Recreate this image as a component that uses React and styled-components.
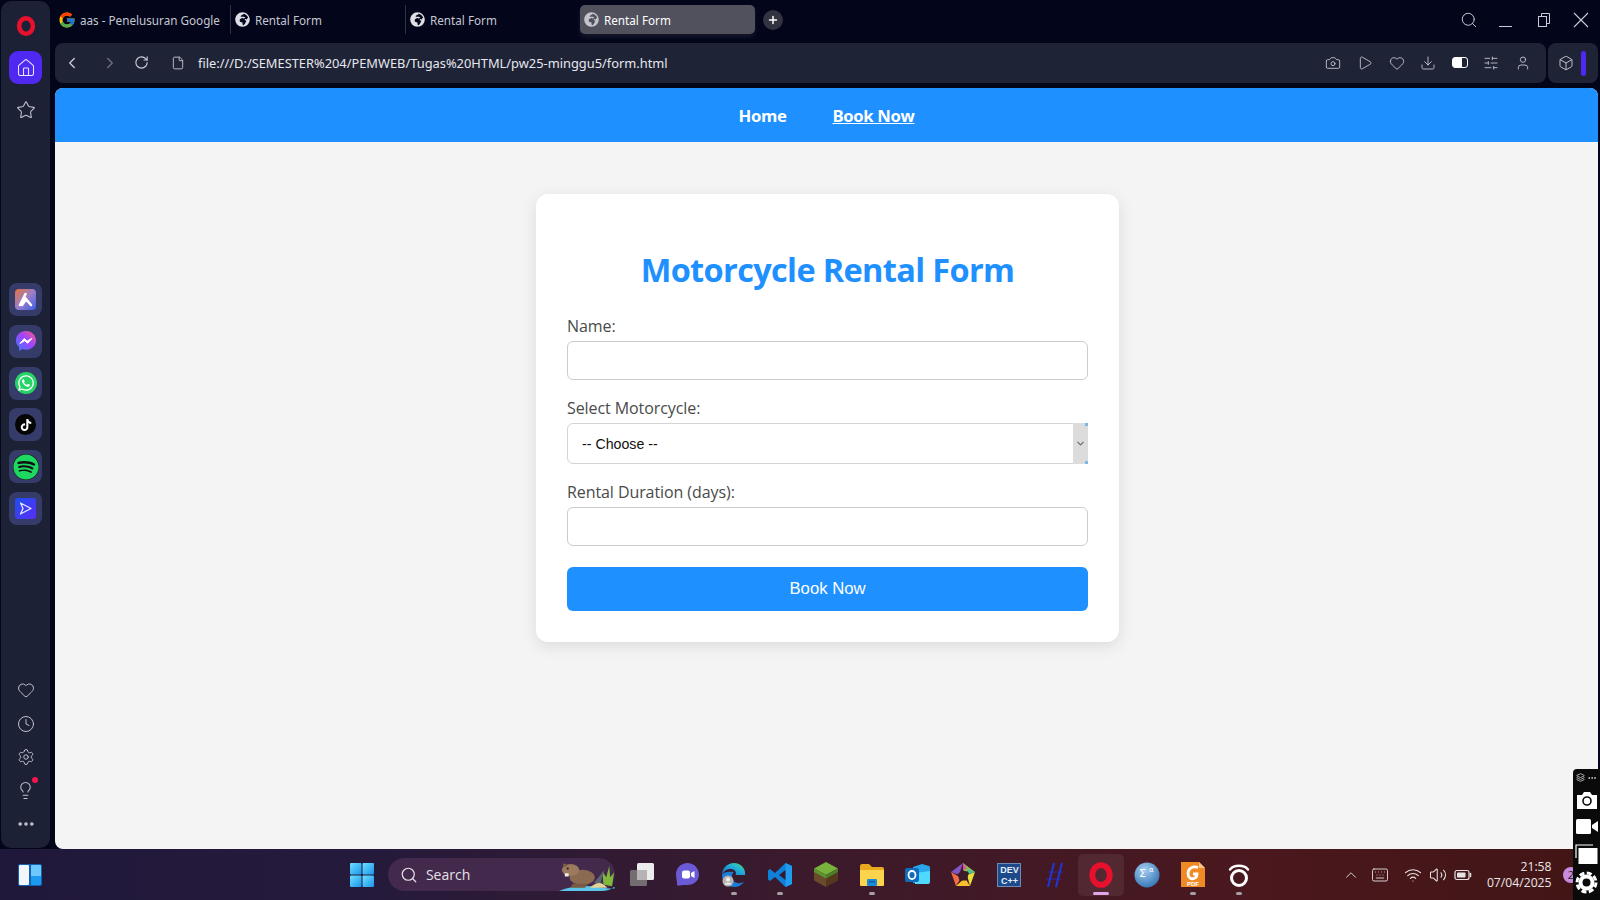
import React from "react";
import styled, { createGlobalStyle } from "styled-components";
import {
  Home, Star, Heart, Clock, Settings, Lightbulb, MoreHorizontal, Search,
  Camera, Play, Download, SlidersHorizontal, User, Box, ChevronLeft, ChevronRight, ChevronDown,
  ChevronUp, RotateCw, File, Plus, Keyboard, Wifi, Volume2, Layers,
} from "lucide-react";
import { FcGoogle } from "react-icons/fc";
import { FaWhatsapp, FaTiktok, FaSpotify, FaGlobeAfrica } from "react-icons/fa";

const Global = createGlobalStyle`
  html, body { margin: 0; padding: 0; background: #03051a; }
  * { box-sizing: border-box; }
`;

const Desktop = styled.div`
  position: relative; width: 1600px; height: 900px; overflow: hidden;
  display: flex; flex-direction: column; background: #03051a;
  font-family: "Noto Sans", sans-serif;
`;
const Workspace = styled.div`display: flex; height: 849px;`;

const Sidebar = styled.aside`
  width: 49px; margin: 1px 0 1px 1px; border-radius: 10px; background: #1d2135;
  display: flex; flex-direction: column; align-items: center; color: #bfc2cf;
  padding: 8px 0 8px;
`;
const SideGroup = styled.div`
  display: flex; flex-direction: column; align-items: center; gap: ${p => p.$gap}px;
  margin-top: ${p => p.$top || 0}px;
`;
const BottomGroup = styled(SideGroup)`margin-top: auto;`;
const SideIcon = styled.div`
  position: relative; width: 33px; height: 33px; display: flex; align-items: center; justify-content: center;
`;
const HomeButton = styled(SideIcon)`background: #4f28f2; border-radius: 9px; color: #e8e6ff;`;
const AppTile = styled.div`
  width: 33px; height: 33px; border-radius: 8px; background: #363c69;
  display: flex; align-items: center; justify-content: center;
`;
const RoundBadge = styled.div`
  width: ${p => p.$s || 22}px; height: ${p => p.$s || 22}px; border-radius: 50%; background: ${p => p.$bg};
  color: ${p => p.$fg || "#fff"}; display: flex; align-items: center; justify-content: center;
`;
const RedDot = styled.span`
  position: absolute; right: 4px; top: 3px; width: 6px; height: 6px; border-radius: 50%; background: #f5164f;
`;

const Browser = styled.div`
  flex: 1; min-width: 0; margin: 0 2px 0 5px; display: flex; flex-direction: column;
`;
const TabBar = styled.div`display: flex; align-items: center; height: 43px; padding-bottom: 4px; color: #c9ccd6;`;
const Tab = styled.div`
  position: relative; width: 175px; height: 29px; display: flex; align-items: center; gap: ${p => p.$gap || 5}px;
  padding-left: ${p => p.$pad}px; font-size: 11.7px; color: ${p => (p.$active ? "#fff" : "#c5c8d1")};
  background: ${p => (p.$active ? "#50515c" : "transparent")}; border-radius: ${p => (p.$active ? "5px" : 0)};
  box-shadow: ${p => (p.$active ? "0 3px 5px rgba(255,255,255,.08)" : "none")};
  border-left: ${p => (p.$sep ? "1px solid #30323f" : "0")};
  white-space: nowrap;
`;
const NewTab = styled.div`
  width: 20px; height: 20px; margin-left: 8px; border-radius: 50%; background: #31333f; color: #fff;
  display: flex; align-items: center; justify-content: center;
`;
const WindowControls = styled.div`
  margin-left: auto; display: flex; align-items: center; gap: 19.5px; padding-right: 8px; color: #c9ccd6;
`;
const ToolRow = styled.div`display: flex; height: 40px; gap: 2px;`;
const Toolbar = styled.div`
  flex: 1; background: #1f2336; border-radius: 8px; display: flex; align-items: center;
  padding: 0 15px 1px 8px; color: #c9ccd6;
`;
const ToolIcon = styled.span`
  display: flex; width: 18px; justify-content: center; margin-left: ${p => p.$ml || 0}px; opacity: ${p => p.$dim ? 0.45 : 1};
`;
const Url = styled.div`margin-left: 11px; font-size: 12.85px; color: #e6e7ee; white-space: nowrap;`;
const ToolActions = styled.div`margin-left: auto; display: flex; align-items: center; gap: 15.6px;`;
const HalfSquare = styled.span`
  display: block; width: 16px; height: 11px; border-radius: 3px; border: 1px solid #fff;
  background: linear-gradient(90deg, #fff 65%, transparent 65%);
`;
const ExtensionBox = styled.div`
  width: 50px; background: #1f2336; border-radius: 8px; display: flex; align-items: center; color: #d6d8e0;
  padding-left: 10px; gap: 7px;
`;
const PurpleBar = styled.span`width: 5px; height: 25px; border-radius: 3px; background: #4f28f2;`;

const Page = styled.main`
  flex: 1; margin-top: 5px; background: #f4f4f4; border-radius: 8px 8px 0 8px; overflow: hidden;
  font-family: "Open Sans", sans-serif;
`;
const Nav = styled.nav`
  height: 54px; background: #1e90ff; display: flex; align-items: center; justify-content: center; gap: 46px;
`;
const NavLink = styled.a`
  color: #fff; font-weight: 700; font-size: 16.7px; letter-spacing: -.35px;
  text-decoration: ${p => (p.$current ? "underline" : "none")};
`;
const CardArea = styled.div`padding: 52px 0 0 2px;`;
const Card = styled.section`
  width: 583px; margin: 0 auto; background: #fff; border-radius: 12px; padding: 31px;
  box-shadow: 0 4px 16px rgba(0,0,0,.1); height: 448px;
`;
const Title = styled.h1`
  margin: 22px 0 23px; text-align: center; color: #1e90ff; font-size: 32.5px; line-height: 45px; font-weight: 700; letter-spacing: -.65px;
`;
const Label = styled.label`
  display: block; font-size: 16px; line-height: 22px; color: #4a4a4a; margin-bottom: 4px; letter-spacing: -.08px;
`;
const Field = styled.div`margin-bottom: 17px;`;
const Input = styled.input`
  display: block; width: 100%; height: 39px; border: 1px solid #ccc; border-radius: 6px; background: #fff; outline: none;
`;
const SelectBox = styled.div`
  display: flex; height: 41px; border: 1px solid #d4d4d4; border-radius: 6px 0 0 6px; background: #fff;
  font: 14.2px "Liberation Sans", Arial, sans-serif; color: #111;
`;
const SelectValue = styled.div`flex: 1; display: flex; align-items: center; padding-left: 14px;`;
const SelectArrow = styled.div`
  position: relative; width: 15px; margin: -1px -1px -1px 0; background: #dcdcdc; color: #666;
  display: flex; align-items: center; justify-content: center;
  &::before, &::after { content: ""; position: absolute; right: 0; width: 3px; height: 3px; background: #7fb6e4; }
  &::before { top: 0; } &::after { bottom: 0; }
`;
const Submit = styled.button`
  display: block; width: 100%; height: 44px; margin-top: 21px; border: 0; border-radius: 6px; background: #1e90ff; color: #fff;
  font: 16.7px "Liberation Sans", Arial, sans-serif;
`;

const Taskbar = styled.footer`
  height: 51px; display: flex; align-items: center; padding-left: 18px;
  background: linear-gradient(90deg, #20183a 0%, #241a3c 22%, #3b1a2c 50%, #4a181e 78%, #421515 100%);
  color: #fff;
`;
const WidgetsIcon = styled.div`
  display: flex; gap: 2px; width: 24px; height: 22px; padding: 1px; background: #1363b0; border-radius: 2px;
`;
const WidgetLeft = styled.span`flex: 1; background: #f2f5fa; border-radius: 1px;`;
const WidgetRight = styled.span`flex: 1; background: linear-gradient(#6cc8ff 55%, #1a9bf0 55%); border-radius: 1px;`;
const TaskSlot = styled.div`
  position: relative; width: 45.95px; height: 42px; display: flex; align-items: center; justify-content: center;
  flex: none; margin-left: ${p => p.$ml || 0}px; border-radius: 5px;
  background: ${p => (p.$active ? "rgba(255,255,255,.07)" : "transparent")};
  &::after {
    content: ""; position: absolute; bottom: 1px; left: 50%; transform: translateX(-50%);
    display: ${p => (p.$dot ? "block" : "none")};
    width: ${p => (p.$active ? 16 : 6)}px; height: 3px; border-radius: 2px;
    background: ${p => (p.$active ? "#e3a6e8" : "#a6a0a6")};
  }
`;
const SearchBox = styled.div`
  position: relative; width: 227px; height: 33px; margin-left: 3px; margin-right: 4px; border-radius: 17px; flex: none;
  background: #432a4c; display: flex; align-items: center; padding-left: 12px; gap: 8px;
  font: 14px "Open Sans", sans-serif; color: #e6e0e8;
`;
const Beaver = styled.span`position: absolute; right: 0; bottom: 0; display: flex;`;
const DevIcon = styled.div`
  width: 24px; height: 24px; background: #1c4a8a; color: #e6eef8; font: 700 9px/11px "Liberation Sans", sans-serif;
  text-align: center; padding-top: 1px; border: 1px solid #6d8ab5;
`;
const Tray = styled.div`margin-left: 79.5px; display: flex; align-items: center; color: #e7e2e4;`;
const TrayIcon = styled.span`display: flex; width: 18px; justify-content: center; margin-left: ${p => p.$ml || 0}px;`;
const ClockText = styled.div`
  margin-left: 17px; width: 63px; font: 12.2px/16px "Open Sans", sans-serif; color: #ece8ea; white-space: nowrap;
  display: flex; flex-direction: column; align-items: flex-end;
`;
const NotifyBadge = styled.span`
  position: absolute; left: 1563px; bottom: 17px; width: 16px; height: 16px; border-radius: 50%; background: #c98be0; color: #222;
  font: 11px/16px "Open Sans", sans-serif; text-align: center;
`;
const Recorder = styled.aside`
  position: absolute; right: 0; bottom: 0; width: 27px; height: 131px; background: #0a0a0a; border-radius: 4px 0 0 0;
  display: flex; flex-direction: column; align-items: center; color: #fff; padding-top: 3px; gap: 6.5px;
`;
const RecorderTop = styled.div`display: flex; align-items: center; gap: 2px; height: 11px; color: #ddd;`;

const sideIconProps = { size: 20, strokeWidth: 1.3 };
const chromeProps = { size: 16, strokeWidth: 1.3 };

const OperaMark = ({ size = 20 }) => (
  <svg width={size} height={size} viewBox="0 0 24 24">
    <ellipse cx="12" cy="12" rx="7.5" ry="8.5" fill="none" stroke="#e8112d" strokeWidth="5" />
  </svg>
);
const MinimizeGlyph = () => (
  <svg width="18" height="18" viewBox="0 0 18 18"><path d="M2 15.5h13" stroke="currentColor" strokeWidth="1" /></svg>
);
const RestoreGlyph = () => (
  <svg width="18" height="18" viewBox="0 0 18 18" fill="none" stroke="currentColor" strokeWidth="1">
    <rect x="3.5" y="5.5" width="8" height="10" /><path d="M6.5 5.5v-3h8v10h-3" />
  </svg>
);
const CloseGlyph = () => (
  <svg width="18" height="18" viewBox="0 0 18 18"><path d="M2 2l14 14M16 2L2 16" stroke="currentColor" strokeWidth="1.1" /></svg>
);
const AriaIcon = () => (
  <svg width="21" height="21" viewBox="0 0 21 21">
    <defs>
      <linearGradient id="aria" x1="0" y1="0" x2="1" y2="1">
        <stop offset="0" stopColor="#e8703a" /><stop offset=".5" stopColor="#9a7fc8" /><stop offset="1" stopColor="#3a5de8" />
      </linearGradient>
    </defs>
    <rect width="21" height="21" rx="4" fill="url(#aria)" />
    <path d="M5 16 L10.5 5 M10.5 9.5 L16 16 M7 16 L10.5 11" stroke="#fff" strokeWidth="2.6" strokeLinecap="round" fill="none" />
  </svg>
);
const MessengerIcon = () => (
  <svg width="22" height="22" viewBox="0 0 22 22">
    <defs>
      <linearGradient id="msg" x1="0" y1="1" x2="1" y2="0">
        <stop offset="0" stopColor="#3a7bff" /><stop offset=".55" stopColor="#a044ff" /><stop offset="1" stopColor="#ff5a7a" />
      </linearGradient>
    </defs>
    <path d="M11 1C5 1 1 5.2 1 10.5c0 2.8 1.2 5 3 6.6V21l3.4-1.9c1.1.4 2.3.6 3.6.6 6 0 10-4.2 10-9.2S17 1 11 1z" fill="url(#msg)" />
    <path d="M5 13.5l4.2-5 3 2.6 4.8-2.8-4.3 5-3-2.6z" fill="#fff" stroke="#fff" strokeLinejoin="round" />
  </svg>
);
const PlayerIcon = () => (
  <svg width="21" height="21" viewBox="0 0 21 21">
    <defs>
      <linearGradient id="ply" x1="0" y1="0" x2="1" y2="1">
        <stop offset="0" stopColor="#1d4ff0" /><stop offset="1" stopColor="#5a2df5" />
      </linearGradient>
    </defs>
    <rect width="21" height="21" rx="3" fill="url(#ply)" />
    <path d="M5.5 5l10.5 5.5L5.5 16l2.5-5.5z" fill="none" stroke="#e8e4ff" strokeWidth="1.3" strokeLinejoin="round" />
  </svg>
);
const WinLogo = () => (
  <svg width="24" height="24" viewBox="0 0 24 24">
    <defs>
      <linearGradient id="win" x1="0" y1="0" x2="1" y2="1">
        <stop offset="0" stopColor="#6ce0ff" /><stop offset="1" stopColor="#1a94ea" />
      </linearGradient>
    </defs>
    <rect x="0" y="0" width="11.5" height="11.5" rx="1" fill="url(#win)" />
    <rect x="12.5" y="0" width="11.5" height="11.5" rx="1" fill="url(#win)" />
    <rect x="0" y="12.5" width="11.5" height="11.5" rx="1" fill="url(#win)" />
    <rect x="12.5" y="12.5" width="11.5" height="11.5" rx="1" fill="url(#win)" />
  </svg>
);
const BeaverArt = () => (
  <svg width="56" height="29" viewBox="0 0 58 36" preserveAspectRatio="none">
    <path d="M0 36 Q18 27 40 31 T57 31 Q52 36 44 36z" fill="#5cc4e8" />
    <path d="M32 32 Q42 20 50 32z" fill="#e0d49a" />
    <path d="M46 28 L45 12 L49 19 L52 5 L53 19 L57 13 L55 30z" fill="#7fb83a" />
    <path d="M36 26 L47 10 L43 26z" fill="#5a6675" />
    <ellipse cx="24" cy="19" rx="13" ry="9.5" fill="#8a6a50" />
    <ellipse cx="12" cy="10" rx="9" ry="7.5" fill="#9b7a5e" />
    <circle cx="6" cy="4" r="2" fill="#7a5a42" />
    <path d="M14 27 h16 l-3 5 h-15z" fill="#7a5a42" />
    <circle cx="9" cy="8" r="1.2" fill="#222" />
    <rect x="6" y="14" width="4" height="4" fill="#f0ece0" />
  </svg>
);
const TaskView = () => (
  <svg width="26" height="26" viewBox="0 0 26 26">
    <rect x="8" y="1" width="17" height="17" rx="1.5" fill="#ececec" />
    <rect x="1" y="8" width="17" height="16" rx="1.5" fill="#7a7678" fillOpacity=".9" />
    <rect x="8" y="8" width="10" height="10" fill="#b5b3b5" />
  </svg>
);
const MeetIcon = () => (
  <svg width="25" height="25" viewBox="0 0 25 25">
    <path d="M12.5 1C6 1 1 6 1 12.5c0 3 1 6 1 9.5 0 1.5 1 2 2.5 1.5 3-1 5-.5 8-.5C19 23 24 18.5 24 12.5S19 1 12.5 1z" fill="#6a5ad6" />
    <rect x="7" y="8.5" width="8" height="8" rx="2" fill="#fff" />
    <path d="M16 11l3.5-2v7L16 14z" fill="#fff" />
  </svg>
);
const EdgeIcon = () => (
  <svg width="26" height="26" viewBox="0 0 26 26">
    <defs>
      <linearGradient id="edg" x1="0" y1="1" x2="1" y2="0">
        <stop offset="0" stopColor="#1469c8" /><stop offset=".6" stopColor="#21b2d8" /><stop offset="1" stopColor="#53dc6a" />
      </linearGradient>
    </defs>
    <path d="M13 1a12 12 0 0 0-12 12c2-5 7-7 11-5.5 3 1.2 3.5 3.5 2.5 5.5h9.5c1-6-4-12-11-12z" fill="url(#edg)" />
    <path d="M1 13c0 6 5 12 12 12 4 0 8-2 10-5-4 2-9 1.5-11-2-2-3.5-.5-7 1-8-5-1-11 0-12 3z" fill="#1a7cd6" />
    <circle cx="7" cy="19" r="5.5" fill="#b8b4b4" />
    <circle cx="7" cy="17.5" r="2" fill="#f0f0f0" />
    <path d="M3.5 22.5c.5-2.5 6.5-2.5 7 0" fill="#f0f0f0" />
  </svg>
);
const VsCodeIcon = () => (
  <svg width="26" height="26" viewBox="0 0 26 26">
    <path d="M18.5 1L25 4v18l-6.5 3L8 15l-5 4-2-1.5v-9L3 7l5 4z" fill="#0d80d8" />
    <path d="M18.5 1L25 4v18l-6.5 3z" fill="#1f9cf0" />
    <path d="M18.5 8L12 13l6.5 5z" fill="#35192f" />
  </svg>
);
const GrassBlock = () => (
  <svg width="26" height="27" viewBox="0 0 26 27">
    <path d="M13 1l12 6.5L13 14 1 7.5z" fill="#79b23c" />
    <path d="M1 7.5L13 14v12L1 19.5z" fill="#6a4a2b" />
    <path d="M25 7.5L13 14v12l12-6.5z" fill="#54391f" />
    <path d="M1 7.5L13 14v3.5L1 11z" fill="#5c9430" />
    <path d="M25 7.5L13 14v3.5L25 11z" fill="#4c8028" />
  </svg>
);
const FolderIcon = () => (
  <svg width="26" height="24" viewBox="0 0 26 24">
    <path d="M1 3a2 2 0 0 1 2-2h7l3 3h10a2 2 0 0 1 2 2v3H1z" fill="#e8a91e" />
    <path d="M1 7h24v15a1 1 0 0 1-1 1H2a1 1 0 0 1-1-1z" fill="#fcd34d" />
    <rect x="8" y="16" width="10" height="7" rx="1" fill="#1a8ad8" />
    <rect x="10" y="18" width="6" height="1.5" fill="#0d5fa0" />
  </svg>
);
const OutlookIcon = () => (
  <svg width="26" height="24" viewBox="0 0 26 24">
    <path d="M8 4l9-3 7 2a2 2 0 0 1 1 2v11l-5 4H8z" fill="#28a8ea" />
    <path d="M10 10l15-2v11a2 2 0 0 1-2 2H10z" fill="#50d9ff" />
    <rect x="0" y="5" width="14" height="14" rx="2" fill="#0f6cbd" />
    <ellipse cx="7" cy="12" rx="3.5" ry="4" fill="none" stroke="#fff" strokeWidth="1.8" />
  </svg>
);
const MemuIcon = () => (
  <svg width="26" height="26" viewBox="0 0 26 26">
    <path d="M13 1L25 10 13 9z" fill="#8bc34a" />
    <path d="M13 1L1 10l8 3z" fill="#7e57c2" />
    <path d="M1 10l5 14 5-8z" fill="#ef6c4a" />
    <path d="M6 24h14l-5-8z" fill="#f9c02e" />
    <path d="M20 24l5-14-8 3z" fill="#e8e03a" />
    <path d="M13 8l5.5 4-2 6.5h-7l-2-6.5z" fill="#3b1c28" />
    <path d="M17 6.5L25 10l-6 2z" fill="#4fc3a1" />
    <path d="M13 1l4 5.5-4 1.5z" fill="#e24fa0" />
  </svg>
);
const HashIcon = () => (
  <svg width="20" height="26" viewBox="0 0 20 26">
    <path d="M9 1L3 25M17 1L11 25" stroke="#2135d8" strokeWidth="2" fill="none" />
    <path d="M3 10h15M1 17h15" stroke="#2135d8" strokeWidth="1" fill="none" opacity=".7" />
  </svg>
);
const MathIcon = () => (
  <svg width="26" height="26" viewBox="0 0 26 26">
    <defs>
      <radialGradient id="mth" cx=".4" cy=".3" r=".8">
        <stop offset="0" stopColor="#a6cdf0" /><stop offset="1" stopColor="#2a6fb0" />
      </radialGradient>
    </defs>
    <circle cx="13" cy="13" r="12.5" fill="url(#mth)" />
    <text x="5" y="15" fontSize="11" fill="#fff" fontFamily="DejaVu Sans">Σ</text>
    <text x="15" y="10" fontSize="7" fill="#fff" fontFamily="DejaVu Sans">α</text>
  </svg>
);
const FoxitIcon = () => (
  <svg width="26" height="27" viewBox="0 0 26 27">
    <path d="M1 1h18l6 6v19H1z" fill="#f08a24" />
    <path d="M19 1l6 6h-6z" fill="#f8c487" />
    <path d="M18 6.5c-5-2-10 1-10 6 0 4 3 6 6 5 2-.7 3-2.5 3-4.5h-4" fill="none" stroke="#fff" strokeWidth="2.8" />
    <text x="13" y="25" fontSize="6" fontWeight="700" textAnchor="middle" fill="#fff" fontFamily="Liberation Sans">PDF</text>
  </svg>
);
const RingIcon = () => (
  <svg width="22" height="28" viewBox="0 0 22 28">
    <circle cx="11" cy="17" r="7.5" fill="none" stroke="#fff" strokeWidth="3" />
    <path d="M2 8.5C6 3.5 16 3.5 20 8.5" fill="none" stroke="#fff" strokeWidth="2.4" strokeLinecap="round" />
  </svg>
);
const BatteryGlyph = () => (
  <svg width="18" height="18" viewBox="0 0 18 18">
    <rect x="1" y="4.5" width="14" height="9" rx="2" fill="none" stroke="currentColor" strokeWidth="1.2" />
    <rect x="3" y="6.5" width="8.5" height="5" rx=".8" fill="currentColor" />
    <path d="M16.5 7.5v3" stroke="currentColor" strokeWidth="1.5" strokeLinecap="round" />
  </svg>
);
const RecCamera = () => (
  <svg width="22" height="20" viewBox="0 0 22 20">
    <path d="M1 5h5l2-3h6l2 3h5v14H1z" fill="#fff" />
    <circle cx="11" cy="11" r="4" fill="none" stroke="#0a0a0a" strokeWidth="1.6" />
  </svg>
);
const RecVideo = () => (
  <svg width="22" height="21" viewBox="0 0 22 21">
    <rect x="0" y="3" width="15" height="15" rx="1.5" fill="#fff" />
    <path d="M16 9l6-4v11l-6-4z" fill="#fff" />
  </svg>
);
const RecWindows = () => (
  <svg width="23" height="21" viewBox="0 0 23 21">
    <path d="M1 14V1h17" fill="none" stroke="#fff" strokeWidth="1.2" />
    <rect x="3.5" y="4" width="19" height="16" fill="#fff" />
  </svg>
);
const RecGear = () => (
  <svg width="23" height="23" viewBox="0 0 23 23">
    <circle cx="11.5" cy="11.5" r="9.5" fill="none" stroke="#fff" strokeWidth="3" strokeDasharray="5 2.46" />
    <circle cx="11.5" cy="11.5" r="6" fill="none" stroke="#fff" strokeWidth="4" />
  </svg>
);

const tabs = [
  { pad: 3, gap: 4, icon: <FcGoogle size={18} />, label: "aas - Penelusuran Google" },
  { pad: 4, sep: true, icon: <FaGlobeAfrica size={15} color="#dfe0e6" />, label: "Rental Form" },
  { pad: 4, sep: true, icon: <FaGlobeAfrica size={15} color="#dfe0e6" />, label: "Rental Form" },
  { pad: 4, active: true, icon: <FaGlobeAfrica size={15} color="#c4c5cc" />, label: "Rental Form" },
];

export default function App() {
  return (
    <Desktop>
      <Global />
      <Workspace>
        <Sidebar>
          <SideGroup $gap={9}>
            <SideIcon><OperaMark size={22} /></SideIcon>
            <HomeButton><Home {...sideIconProps} /></HomeButton>
            <SideIcon><Star {...sideIconProps} /></SideIcon>
          </SideGroup>
          <SideGroup $gap={8.8} $top={157}>
            <AppTile><AriaIcon /></AppTile>
            <AppTile><MessengerIcon /></AppTile>
            <AppTile><RoundBadge $s={22} $bg="#25d366"><FaWhatsapp size={18} /></RoundBadge></AppTile>
            <AppTile><RoundBadge $s={21} $bg="#050505"><FaTiktok size={12} /></RoundBadge></AppTile>
            <AppTile><RoundBadge $s={26} $bg="#101010" $fg="#1ed760"><FaSpotify size={26} /></RoundBadge></AppTile>
            <AppTile><PlayerIcon /></AppTile>
          </SideGroup>
          <BottomGroup $gap={0.3}>
            <SideIcon><Heart size={18} strokeWidth={1.3} /></SideIcon>
            <SideIcon><Clock size={18} strokeWidth={1.3} /></SideIcon>
            <SideIcon><Settings size={18} strokeWidth={1.3} /></SideIcon>
            <SideIcon><Lightbulb size={19} strokeWidth={1.3} /><RedDot /></SideIcon>
            <SideIcon><MoreHorizontal size={20} strokeWidth={2.4} /></SideIcon>
          </BottomGroup>
        </Sidebar>
        <Browser>
          <TabBar>
            {tabs.map((t, i) => (
              <Tab key={i} $pad={t.pad} $gap={t.gap} $sep={t.sep} $active={t.active}>
                {t.icon}
                <span>{t.label}</span>
              </Tab>
            ))}
            <NewTab><Plus size={12} strokeWidth={3} /></NewTab>
            <WindowControls>
              <Search size={18} strokeWidth={1.3} />
              <MinimizeGlyph />
              <RestoreGlyph />
              <CloseGlyph />
            </WindowControls>
          </TabBar>
          <ToolRow>
            <Toolbar>
              <ToolIcon><ChevronLeft size={18} strokeWidth={1.8} /></ToolIcon>
              <ToolIcon $ml={20} $dim><ChevronRight size={18} strokeWidth={1.8} /></ToolIcon>
              <ToolIcon $ml={13}><RotateCw size={15} strokeWidth={1.8} /></ToolIcon>
              <ToolIcon $ml={19}><File size={14} strokeWidth={1.5} /></ToolIcon>
              <Url>file:///D:/SEMESTER%204/PEMWEB/Tugas%20HTML/pw25-minggu5/form.html</Url>
              <ToolActions>
                <Camera {...chromeProps} />
                <Play {...chromeProps} />
                <Heart {...chromeProps} />
                <Download {...chromeProps} />
                <HalfSquare />
                <SlidersHorizontal {...chromeProps} />
                <User {...chromeProps} />
              </ToolActions>
            </Toolbar>
            <ExtensionBox>
              <Box {...chromeProps} />
              <PurpleBar />
            </ExtensionBox>
          </ToolRow>
          <Page>
            <Nav>
              <NavLink>Home</NavLink>
              <NavLink $current>Book Now</NavLink>
            </Nav>
            <CardArea>
              <Card>
                <Title>Motorcycle Rental Form</Title>
                <Field>
                  <Label>Name:</Label>
                  <Input type="text" />
                </Field>
                <Field>
                  <Label>Select Motorcycle:</Label>
                  <SelectBox>
                    <SelectValue>-- Choose --</SelectValue>
                    <SelectArrow><ChevronDown size={11} strokeWidth={2.4} /></SelectArrow>
                  </SelectBox>
                </Field>
                <Field>
                  <Label>Rental Duration (days):</Label>
                  <Input type="text" />
                </Field>
                <Submit>Book Now</Submit>
              </Card>
            </CardArea>
          </Page>
        </Browser>
      </Workspace>
      <Taskbar>
        <WidgetsIcon><WidgetLeft /><WidgetRight /></WidgetsIcon>
        <TaskSlot $ml={297}><WinLogo /></TaskSlot>
        <SearchBox>
          <Search size={18} strokeWidth={1.6} />
          Search
          <Beaver><BeaverArt /></Beaver>
        </SearchBox>
        <TaskSlot><TaskView /></TaskSlot>
        <TaskSlot><MeetIcon /></TaskSlot>
        <TaskSlot $dot><EdgeIcon /></TaskSlot>
        <TaskSlot $dot><VsCodeIcon /></TaskSlot>
        <TaskSlot><GrassBlock /></TaskSlot>
        <TaskSlot $dot><FolderIcon /></TaskSlot>
        <TaskSlot><OutlookIcon /></TaskSlot>
        <TaskSlot><MemuIcon /></TaskSlot>
        <TaskSlot><DevIcon>DEV<br />C++</DevIcon></TaskSlot>
        <TaskSlot><HashIcon /></TaskSlot>
        <TaskSlot $dot $active><OperaMark size={28} /></TaskSlot>
        <TaskSlot><MathIcon /></TaskSlot>
        <TaskSlot $dot><FoxitIcon /></TaskSlot>
        <TaskSlot $dot><RingIcon /></TaskSlot>
        <Tray>
          <TrayIcon><ChevronUp size={20} strokeWidth={1.2} /></TrayIcon>
          <TrayIcon $ml={11}><Keyboard size={18} strokeWidth={1.2} /></TrayIcon>
          <TrayIcon $ml={15}><Wifi size={18} strokeWidth={1.6} /></TrayIcon>
          <TrayIcon $ml={7}><Volume2 size={18} strokeWidth={1.4} /></TrayIcon>
          <TrayIcon $ml={7}><BatteryGlyph /></TrayIcon>
          <ClockText><span>21:58</span><span>07/04/2025</span></ClockText>
        </Tray>
      </Taskbar>
      <NotifyBadge>2</NotifyBadge>
      <Recorder>
        <RecorderTop><Layers size={9} /><MoreHorizontal size={10} /></RecorderTop>
        <RecCamera />
        <RecVideo />
        <RecWindows />
        <RecGear />
      </Recorder>
    </Desktop>
  );
}
